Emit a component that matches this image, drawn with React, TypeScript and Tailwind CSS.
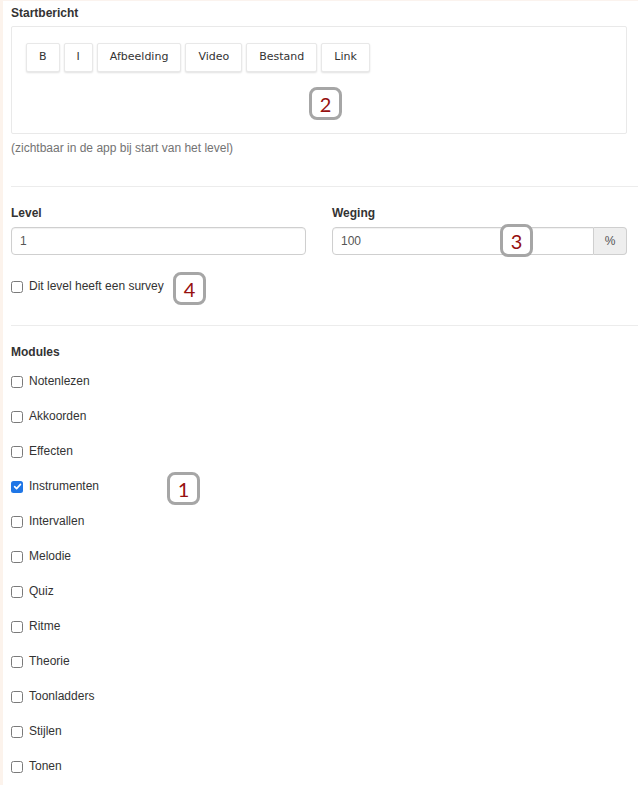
import React from "react";

const modules = [
  "Notenlezen",
  "Akkoorden",
  "Effecten",
  "Instrumenten",
  "Intervallen",
  "Melodie",
  "Quiz",
  "Ritme",
  "Theorie",
  "Toonladders",
  "Stijlen",
  "Tonen",
];

function Box({ checked }: { checked?: boolean }) {
  if (checked) {
    return (
      <span className="inline-flex h-[12px] w-[12px] shrink-0 items-center justify-center rounded-[2.5px] bg-[#1f76e6]">
        <svg width="9" height="9" viewBox="0 0 10 10">
          <path d="M1.8 5.2 L4 7.4 L8.3 2.6" fill="none" stroke="#fff" strokeWidth="1.8" strokeLinecap="round" strokeLinejoin="round" />
        </svg>
      </span>
    );
  }
  return <span className="inline-block h-[12px] w-[12px] shrink-0 rounded-[2.5px] border border-[#7a7a7a] bg-white" />;
}

function Check({ label, checked }: { label: string; checked?: boolean }) {
  return (
    <label className="flex h-[17px] items-center gap-[6px] text-[12px] leading-[17px] text-[#333]">
      <Box checked={checked} />
      <span>{label}</span>
    </label>
  );
}

function Badge({ n, className }: { n: string; className: string }) {
  return (
    <div
      className={`absolute flex h-[33px] w-[33px] items-center justify-center rounded-[8px] border-[3px] border-[#a6a6a6] bg-white text-[20px] font-normal leading-none text-[#960f0f] ${className}`}
      style={{ fontFamily: "Lato, 'Open Sans', sans-serif" }}
    >
      {n}
    </div>
  );
}

const btn =
  "h-[29px] rounded-[2px] border border-[#e8e8e8] bg-white px-[12px] text-[11px] text-[#333] shadow-[0_1px_2px_rgba(0,0,0,0.12)]";

export default function App() {
  return (
    <div
      className="relative min-h-[785px] border-l-[3px] border-t border-l-[#fcf3ec] border-t-[#fbf3ee] bg-white pl-[8px] pr-[11px] pt-[4px] text-[#333]"
      style={{ fontFamily: "'Liberation Sans', Arial, sans-serif" }}
    >
      <div className="text-[12px] font-bold leading-[17px]">Startbericht</div>
      <div className="mt-[4px] h-[108px] rounded-[2px] border border-[#e9e9e9] px-[14px] pt-[16px]">
        <div className="flex gap-[4px]" style={{ fontFamily: "'DejaVu Sans', Verdana, sans-serif" }}>
          <button className={btn}>B</button>
          <button className={btn}>I</button>
          <button className={btn}>Afbeelding</button>
          <button className={btn}>Video</button>
          <button className={btn}>Bestand</button>
          <button className={btn}>Link</button>
        </div>
      </div>
      <div className="mt-[6px] text-[12px] leading-[17px] text-[#737373]">
        (zichtbaar in de app bij start van het level)
      </div>

      <hr className="-mr-[11px] mt-[29px] border-0 border-t border-[#ececec]" />

      <div className="mt-[18px] grid grid-cols-2 gap-[26px]">
        <div>
          <div className="text-[12px] font-bold leading-[17px]">Level</div>
          <div className="mt-[5px] flex h-[28px] items-center rounded-[4px] border border-[#cfcfcf] px-[8px] text-[12px] text-[#555] shadow-[inset_0_1px_1px_rgba(0,0,0,0.06)]">
            1
          </div>
        </div>
        <div>
          <div className="text-[12px] font-bold leading-[17px]">Weging</div>
          <div className="mt-[5px] flex h-[28px]">
            <div className="flex flex-1 items-center rounded-l-[4px] border border-[#cfcfcf] px-[8px] text-[12px] text-[#555] shadow-[inset_0_1px_1px_rgba(0,0,0,0.06)]">
              100
            </div>
            <div className="flex w-[33px] items-center justify-center rounded-r-[4px] border border-l-0 border-[#cfcfcf] bg-[#eeeeee] text-[12px] text-[#555]">
              %
            </div>
          </div>
        </div>
      </div>

      <div className="mt-[23px]">
        <Check label="Dit level heeft een survey" />
      </div>

      <hr className="-mr-[11px] mt-[30px] border-0 border-t border-[#ececec]" />

      <div className="mt-[18px] text-[12px] font-bold leading-[17px]">Modules</div>
      <div className="mt-[12px] flex flex-col gap-[18px]">
        {modules.map((m) => (
          <Check key={m} label={m} checked={m === "Instrumenten"} />
        ))}
      </div>

      <Badge n="2" className="left-[306px] top-[86px]" />
      <Badge n="3" className="left-[497px] top-[223px]" />
      <Badge n="4" className="left-[170px] top-[271px]" />
      <Badge n="1" className="left-[164px] top-[471px]" />
    </div>
  );
}
